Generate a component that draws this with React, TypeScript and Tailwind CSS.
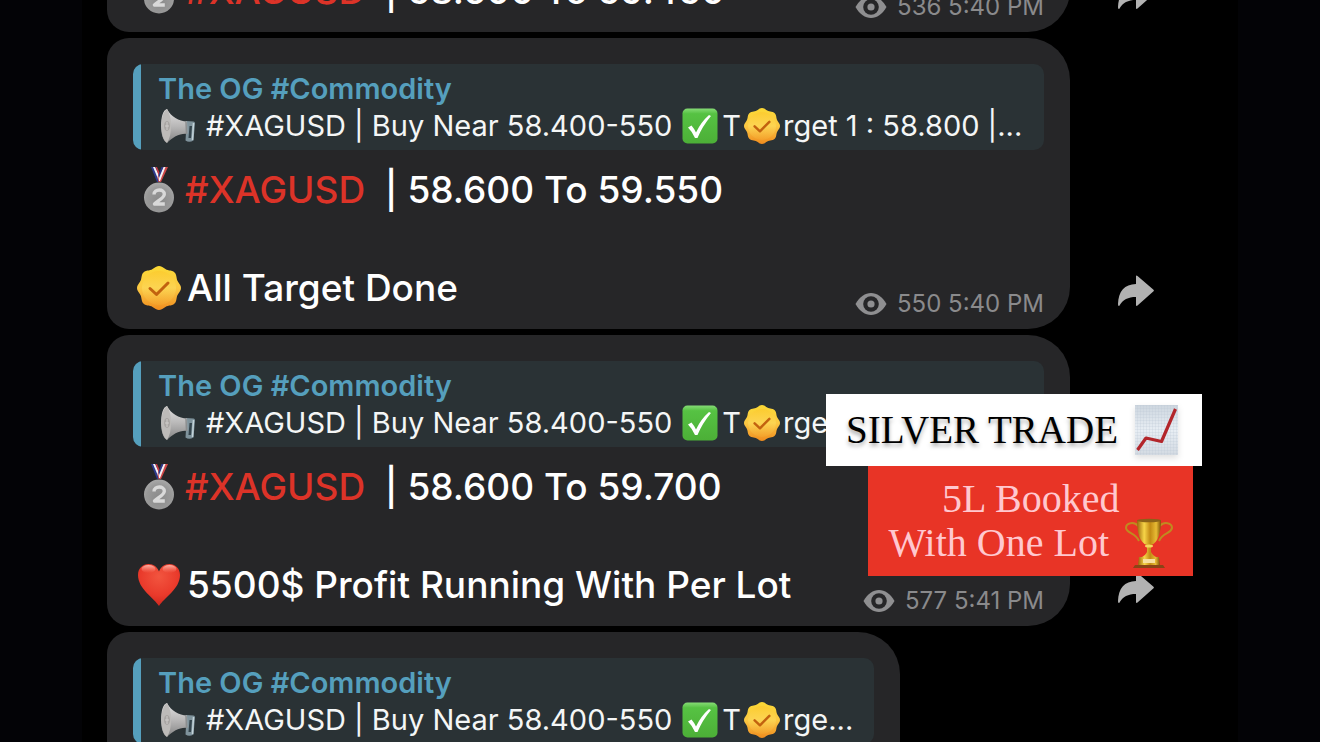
import React from "react";

type Message = {
  id: number;
  quote: string;
  price: string;
  note?: string;
  icon?: "seal" | "heart";
  views: number;
  time: string;
  narrow?: boolean;
};

const messages: Message[] = [
  { id: 1, quote: "rget 1 : 58.800 |...", price: "58.600 To 59.450", views: 536, time: "5:40 PM" },
  { id: 2, quote: "rget 1 : 58.800 |...", price: "58.600 To 59.550", note: "All Target Done", icon: "seal", views: 550, time: "5:40 PM" },
  { id: 3, quote: "rget 1 : 58.800 |...", price: "58.600 To 59.700", note: "5500$ Profit Running With Per Lot", icon: "heart", views: 577, time: "5:41 PM" },
  { id: 4, quote: "rge...", price: "58.600 To 59.800", views: 590, time: "5:42 PM", narrow: true },
];

// Outline of the eight-lobed badge
const sealPoints = Array.from({ length: 96 }, (_, i) => {
  const a = (i / 96) * Math.PI * 2;
  const r = 20.9 + 1.1 * Math.cos(8 * a);
  return `${(22 + r * Math.sin(a)).toFixed(2)},${(22 - r * Math.cos(a)).toFixed(2)}`;
}).join(" ");

const SealIcon = ({ className }: { className: string }) => (
  <svg viewBox="0 0 44 44" className={className} aria-hidden="true">
    <defs>
      <linearGradient id="seal" x1="0" y1="0" x2="0" y2="1">
        <stop offset="0" stopColor="#fbd834" />
        <stop offset="0.5" stopColor="#fbc944" />
        <stop offset="1" stopColor="#f08c1e" />
      </linearGradient>
      <linearGradient id="sealInner" x1="0" y1="0" x2="0" y2="1">
        <stop offset="0" stopColor="#fcc72c" />
        <stop offset="0.5" stopColor="#fddc5c" />
        <stop offset="1" stopColor="#f5a52e" />
      </linearGradient>
    </defs>
    <polygon points={sealPoints} fill="url(#seal)" />
    <circle cx="22" cy="22" r="17" fill="url(#sealInner)" opacity="0.6" />
    <path d="M13 22.5 L19.5 28.5 L31 17" fill="none" stroke="#c2620f" strokeWidth="3" strokeLinecap="round" strokeLinejoin="round" />
  </svg>
);

const HeartIcon = ({ className }: { className: string }) => (
  <svg viewBox="0 0 44 44" className={className} aria-hidden="true">
    <defs>
      <radialGradient id="heart" cx="0.5" cy="0.3" r="0.75">
        <stop offset="0" stopColor="#f2553f" />
        <stop offset="0.6" stopColor="#e93a2b" />
        <stop offset="1" stopColor="#c9241c" />
      </radialGradient>
      <linearGradient id="shine" x1="0" y1="0" x2="0" y2="1">
        <stop offset="0" stopColor="#ffc0b4" stopOpacity="0.9" />
        <stop offset="1" stopColor="#ff8a78" stopOpacity="0" />
      </linearGradient>
    </defs>
    <path d="M22 43 C17 35 1 26 1 12 C1 5 6 1 11.500 1 C16.500 1 20.500 4 22 8.500 C23.500 4 27.500 1 32.500 1 C38 1 43 5 43 12 C43 26 27 35 22 43 Z" fill="url(#heart)" />
    <ellipse cx="11.500" cy="6" rx="7" ry="4" fill="url(#shine)" />
    <ellipse cx="32.500" cy="6" rx="7" ry="4" fill="url(#shine)" />
  </svg>
);

const MedalIcon = ({ className }: { className: string }) => (
  <svg viewBox="0 0 44 46" className={className} aria-hidden="true">
    <defs>
      <radialGradient id="medal" cx="0.5" cy="0.6" r="0.6">
        <stop offset="0" stopColor="#8a8a8a" />
        <stop offset="0.7" stopColor="#999999" />
        <stop offset="1" stopColor="#a9a9a9" />
      </radialGradient>
    </defs>
    <path d="M14 0 H19 L24 10 L21.500 15 H20 Z" fill="#2b3a8c" />
    <path d="M16 0 H18 L22.500 9 L21.500 13 Z" fill="#f4f2f5" />
    <path d="M18.500 0 H20 L23.500 8 L22.500 11 Z" fill="#c83a3e" />
    <path d="M31 0 H26 L20.500 10 L21.500 15 H24 Z" fill="#d04848" />
    <path d="M28.500 0 H26.500 L21.500 10 L22 14 H23 Z" fill="#f4f2f5" />
    <path d="M26.500 0 H24.500 L21.500 8 L22 11 Z" fill="#2b3a8c" />
    <circle cx="22" cy="30.500" r="15" fill="url(#medal)" />
    <path d="M17 27.500 C17 21.500 27.500 21.500 27.300 27.200 C27.200 31 21 33.500 17.500 37 H27.800" fill="none" stroke="#d9d9d9" strokeWidth="3.400" strokeLinejoin="round" />
  </svg>
);

const MegaphoneIcon = ({ className }: { className: string }) => (
  <svg viewBox="0 0 36 36" className={className} aria-hidden="true">
    <defs>
      <linearGradient id="horn" x1="0" y1="0" x2="0" y2="1">
        <stop offset="0" stopColor="#e2e2e2" />
        <stop offset="0.5" stopColor="#b9b8b8" />
        <stop offset="1" stopColor="#848484" />
      </linearGradient>
    </defs>
    {/* pistol grip */}
    <path d="M26 13 L33.500 13.500 Q35 13.500 35 15.500 L33.500 32.500 Q29 35 25.500 32.500 L26 24 Z" fill="#7f939c" />
    <path d="M29.500 18 H32 L31 30 H28.500 Z" fill="#34444c" />
    <path d="M33.500 15 L32.500 32" stroke="#c3d3d9" strokeWidth="1.500" />
    {/* horn */}
    <path d="M7 1 C11 9 19 13 27 13.500 L27.500 26 C20 25 13 29 7 35 C3 33 1 26 1 18 C1 9 3 2 7 1 Z" fill="url(#horn)" />
    <path d="M7 1 C3 4 1.500 10 1.500 18 C1.500 26 3 32 7 35 C10 30 11 25 11 18 C11 11 10 6 7 1 Z" fill="#bdbbb9" />
    <ellipse cx="7" cy="18" rx="3" ry="5" fill="#a8a5a3" />
    <path d="M7 14 V22 M5 18 H9" stroke="#cfcdcb" strokeWidth="1" />
    <path d="M26 13.500 L26.500 26" stroke="#8b8e8f" strokeWidth="1.500" />
  </svg>
);

const CheckIcon = ({ className }: { className: string }) => (
  <svg viewBox="0 0 36 36" className={className} aria-hidden="true">
    <defs>
      <linearGradient id="check" x1="0" y1="0" x2="0" y2="1">
        <stop offset="0" stopColor="#86dc76" />
        <stop offset="0.15" stopColor="#56c243" />
        <stop offset="1" stopColor="#4caf37" />
      </linearGradient>
    </defs>
    <rect x="0.500" y="0.500" width="35" height="35" rx="5" fill="url(#check)" />
    <path d="M6 19.500 L9.500 17.500 Q12.500 21 14 24.500 Q19 14 27 7 L29 8 Q20.500 18 15.500 30 H13 Q10.500 24 6 19.500 Z" fill="#fff" />
  </svg>
);

const ChartIcon = ({ className }: { className: string }) => (
  <svg viewBox="0 0 44 50" className={className} aria-hidden="true">
    <defs>
      <linearGradient id="paper" x1="0" y1="0" x2="0" y2="1">
        <stop offset="0" stopColor="#cdd6df" />
        <stop offset="0.5" stopColor="#e8eef4" />
        <stop offset="1" stopColor="#d3dae2" />
      </linearGradient>
      <pattern id="grid" width="3" height="3" patternUnits="userSpaceOnUse">
        <path d="M3 0 H0 V3" fill="none" stroke="#bac8d5" strokeWidth="0.500" />
      </pattern>
    </defs>
    <rect x="1" y="0" width="43" height="50" fill="url(#paper)" />
    <rect x="1" y="0" width="43" height="50" fill="url(#grid)" />
    <path d="M3.500 45 L12 33 L27.500 36.500 L41.500 4" fill="none" stroke="#b3262b" strokeWidth="3.200" strokeLinejoin="round" />
  </svg>
);

const TrophyIcon = ({ className }: { className: string }) => (
  <svg viewBox="0 0 48 50" className={className} aria-hidden="true">
    <defs>
      <linearGradient id="cup" x1="0" y1="0" x2="1" y2="0">
        <stop offset="0" stopColor="#9a640a" />
        <stop offset="0.3" stopColor="#f7d548" />
        <stop offset="0.55" stopColor="#c28a14" />
        <stop offset="0.8" stopColor="#e8bb34" />
        <stop offset="1" stopColor="#7d5006" />
      </linearGradient>
    </defs>
    <path d="M13 8 C9 3 1 5 1 10 C2 16 10 14 14 23 M35 8 C39 3 47 5 47 10 C46 16 38 14 34 23" fill="none" stroke="#c08a20" strokeWidth="2" />
    <path d="M12 2 H36 C36 15 33 25 26 27 L26 34 C27 36 29 38 31 39 H17 C19 38 21 36 22 34 L22 27 C15 25 12 15 12 2 Z" fill="url(#cup)" />
    <ellipse cx="24" cy="2.500" rx="12" ry="1.800" fill="#8b6218" />
    <ellipse cx="24" cy="28" rx="4" ry="1.500" fill="#f5d65c" />
    <path d="M14 39 H34 L35 47 H13 Z" fill="url(#cup)" />
    <rect x="18" y="41" width="12" height="4" fill="#f7dfa0" />
    <path d="M10 47 H38 L40 50 H8 Z" fill="#8a4416" />
  </svg>
);

const EyeIcon = () => (
  <svg viewBox="0 0 32 24" className="-my-1 h-6 w-8" aria-hidden="true">
    <path d="M0.500 12 C5 4.500 10 1 16 1 C22 1 27 4.500 31.500 12 C27 19.500 22 23 16 23 C10 23 5 19.500 0.500 12 Z" fill="#8f8f91" />
    <circle cx="16" cy="12" r="7.800" fill="#262628" />
    <circle cx="16" cy="12" r="3.600" fill="#8f8f91" />
  </svg>
);

const ShareIcon = () => (
  <svg viewBox="0 0 36 32" className="h-8 w-9" aria-hidden="true">
    <path d="M18 1.500 Q18 0 19.500 1 L35.500 14.700 Q36.300 15.500 35.500 16.300 L19.500 30.500 Q18 31.500 18 30 V22 C10 22 5 24.500 1.200 31 Q0 31.500 0 29 C0.500 16 6.500 9.500 18 9 Z" fill="#b2b2b2" />
  </svg>
);

const Meta = ({ views, time }: { views: number; time: string }) => (
  <p className="flex items-center gap-2.5 text-2xl leading-4 font-normal whitespace-nowrap text-[#8a8a8c]">
    <EyeIcon />
    {views} {time}
  </p>
);

const Bubble = ({ message }: { message: Message }) => (
  <article
    className={
      message.narrow
        ? "mr-[170px] min-w-0 flex-1 rounded-l-[22px] rounded-r-[42px] bg-[#262628] px-[26px] pt-[26px] pb-[17px]"
        : "min-w-0 flex-1 rounded-l-[22px] rounded-r-[42px] bg-[#262628] px-[26px] pt-[26px] pb-[17px]"
    }
  >
    <blockquote className="overflow-hidden rounded-[10px] bg-[#2a3235]">
      <div className="border-l-8 border-[#559fbd] py-1.5 pl-[17px] text-[29px] leading-[37px]">
        <p className="font-semibold text-[#559fbd]">The OG #Commodity</p>
        <p className="flex items-center whitespace-nowrap text-[#f4f6f6]">
          <MegaphoneIcon className="mr-2.5 ml-0.5 h-9 w-9 shrink-0" />
          <span>#XAGUSD | Buy Near 58.400-550</span>
          <CheckIcon className="mr-1 ml-2.5 h-9 w-9 shrink-0" />
          <span>T</span>
          <SealIcon className="mx-[3px] h-9 w-9 shrink-0" />
          <span>{message.quote}</span>
        </p>
      </div>
    </blockquote>
    <div className="mt-[15px] pl-1 text-[37px] leading-[49px] font-medium text-white">
      <div className="flex items-end justify-between">
        <p className="flex items-center whitespace-pre">
          <MedalIcon className="mr-1 h-[46px] w-11 shrink-0" />
          <span className="text-[#dc3328]">#XAGUSD</span>
          <span>{"  | "}{message.price}</span>
        </p>
        {!message.note && <Meta views={message.views} time={message.time} />}
      </div>
      {message.note && (
        <div className="mt-[49px] flex items-end justify-between">
          <p className="flex items-center">
            {message.icon === "seal" ? (
              <SealIcon className="mr-1.5 h-11 w-11 shrink-0" />
            ) : (
              <HeartIcon className="mr-1.5 h-11 w-11 shrink-0" />
            )}
            <span>{message.note}</span>
          </p>
          <Meta views={message.views} time={message.time} />
        </div>
      )}
    </div>
  </article>
);

const App = () => {
  return (
    <div className="relative h-screen overflow-hidden bg-[#030306] px-[82px] font-['Inter','Liberation_Sans',sans-serif]">
      <main className="h-full overflow-hidden bg-black">
        <div className="-mt-[161px] flex flex-col gap-1.5 pl-[25px]">
          {messages.map((message) => (
            <div key={message.id} className="flex items-end">
              <Bubble message={message} />
              <div className="w-[168px] shrink-0 pb-[22px] pl-12">
                <button type="button" aria-label="Share" className="block">
                  <ShareIcon />
                </button>
              </div>
            </div>
          ))}
        </div>
      </main>

      {/* Caption stickers over the chat */}
      <aside className="absolute top-[394px] right-[118px] flex flex-col items-end font-['Liberation_Serif',serif] text-[40px] leading-[44px]">
        <h1 className="flex items-center gap-4 bg-white py-[11px] pr-6 pl-5 text-[39px] text-black">
          <span className="[text-shadow:0_3px_4px_rgba(0,0,0,0.35)]">SILVER TRADE</span>
          <ChartIcon className="h-[50px] w-11 drop-shadow-md" />
        </h1>
        <div className="mr-[9px] flex flex-col items-center bg-[#e83426] px-5 py-[11px] text-[#ffc8cf]">
          <p>5L Booked</p>
          <p className="flex items-center gap-4">
            With One Lot
            <TrophyIcon className="-my-1 h-[50px] w-12" />
          </p>
        </div>
      </aside>
    </div>
  );
};

export default App;
